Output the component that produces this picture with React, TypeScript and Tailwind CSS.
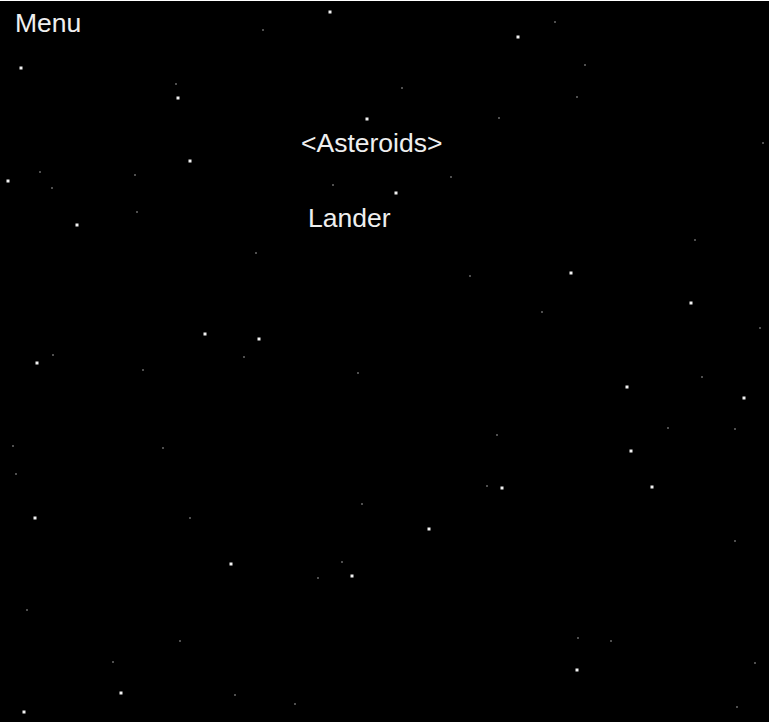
import React from "react"

// [x, y, big]
const stars: [number, number, number][] = [
	[330, 12, 1], [518, 37, 1], [555, 22, 0], [21, 68, 1], [178, 98, 1], [176, 84, 0],
	[585, 65, 0], [577, 97, 0], [263, 30, 0], [402, 88, 0], [367, 119, 1], [190, 161, 1],
	[8, 181, 1], [135, 175, 0], [396, 193, 1], [333, 185, 0], [451, 177, 0], [77, 225, 1],
	[137, 212, 0], [499, 118, 0], [695, 240, 0], [763, 143, 0], [40, 172, 0], [52, 188, 0],
	[256, 253, 0], [205, 334, 1], [259, 339, 1], [244, 357, 0], [37, 363, 1], [53, 355, 0],
	[143, 370, 0], [358, 373, 0], [13, 446, 0], [163, 448, 0], [16, 474, 0],
	[470, 276, 0], [571, 273, 1], [542, 312, 0], [691, 303, 1], [760, 328, 0], [627, 387, 1],
	[702, 377, 0], [744, 398, 1], [497, 435, 0], [668, 428, 0], [735, 429, 0], [631, 451, 1],
	[487, 486, 0], [502, 488, 1], [652, 487, 1],
	[35, 518, 1], [190, 518, 0], [362, 504, 0], [429, 529, 1], [735, 541, 0], [231, 564, 1],
	[342, 562, 0], [352, 576, 1], [318, 578, 0], [27, 610, 0], [180, 641, 0], [113, 662, 0],
	[121, 693, 1], [235, 695, 0], [295, 704, 0], [24, 712, 1], [578, 638, 0], [611, 641, 0],
	[577, 670, 1], [755, 663, 0], [737, 707, 0],
]

export default function App() {
	return (
		<div className="min-h-screen bg-white pt-px">
			<div className="relative w-[769px] h-[721px] bg-black text-white font-['Liberation_Sans',Arial,sans-serif] text-[26.5px] leading-[26px]">
				<svg className="absolute inset-0" width="769" height="721">
					{stars.map(([x, y, big], i) =>
						big ? (
							<rect key={i} x={x - 1.5} y={y - 2.5} width="3" height="3" fill="#f2f2f2" />
						) : (
							<rect key={i} x={x - 0.75} y={y - 1.75} width="1.5" height="1.5" fill="#8a8a8a" />
						)
					)}
				</svg>

				<div className="relative pt-[9px] pl-[15px] text-[#efefef]">Menu</div>

				<div className="relative mt-[94px] flex flex-col gap-[49px] text-[#efefef]">
					<div className="pl-[301px]">&lt;Asteroids&gt;</div>
					<div className="pl-[308px]">Lander</div>
				</div>
			</div>
		</div>
	)
}
